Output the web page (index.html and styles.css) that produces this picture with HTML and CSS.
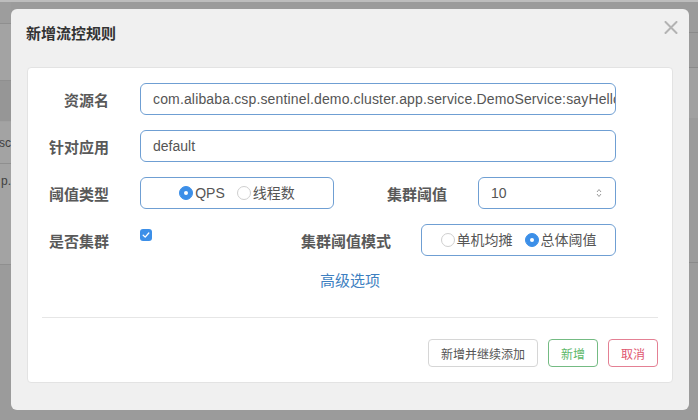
FILE: index.html
```html
<!DOCTYPE html>
<html lang="zh">
<head>
<meta charset="utf-8">
<title>新增流控规则</title>
<link rel="stylesheet" href="styles.css">
</head>
<body>
<div class="page">
  <div class="bg-left">
    <div class="bl bl-a"></div>
    <div class="bl bl-b"></div>
    <div class="bl bl-c"></div>
    <div class="bl bl-d"><span>sc</span></div>
    <div class="bl bl-e"><span>p.</span></div>
    <div class="bl bl-f"></div>
  </div>
  <div class="bg-mid"></div>
  <div class="bg-right">
    <div class="br br-a"></div>
    <div class="br br-b"></div>
    <div class="br br-c"></div>
    <div class="br br-d"></div>
    <div class="br br-e"></div>
  </div>
</div>

<div class="modal">
  <div class="modal-header">
    <h4 class="modal-title">新增流控规则</h4>
    <span class="close" aria-label="关闭">
      <svg width="14" height="13" viewBox="0 0 14 13"><path d="M1.5 1 L12.5 12 M12.5 1 L1.5 12" stroke="#b3b3b3" stroke-width="2" stroke-linecap="round" fill="none"/></svg>
    </span>
  </div>
  <div class="card">
    <div class="form">
      <div class="row">
        <label class="lbl">资源名</label>
        <div class="field grow long">com.alibaba.csp.sentinel.demo.cluster.app.service.DemoService:sayHello</div>
      </div>
      <div class="row">
        <label class="lbl">针对应用</label>
        <div class="field grow">default</div>
      </div>
      <div class="row">
        <label class="lbl">阈值类型</label>
        <div class="field radios r1">
          <span class="radio on"></span><span class="rtext">QPS</span>
          <span class="radio"></span><span class="rtext">线程数</span>
        </div>
        <label class="lbl2 w113">集群阈值</label>
        <div class="field num">
          <span class="numval">10</span>
          <svg class="spin" width="6" height="10" viewBox="0 0 6 10"><path d="M1 4 L3 1.5 L5 4 M1 6 L3 8.5 L5 6" stroke="#9a9a9a" stroke-width="1" fill="none"/></svg>
        </div>
      </div>
      <div class="row">
        <label class="lbl">是否集群</label>
        <div class="checkcell">
          <span class="check">
            <svg width="12" height="12" viewBox="0 0 12 12"><path d="M3.2 6.2 L5.2 8.1 L8.8 4" stroke="#fff" stroke-width="1.3" fill="none" stroke-linecap="round" stroke-linejoin="round"/></svg>
          </span>
        </div>
        <label class="lbl2">集群阈值模式</label>
        <div class="field radios r2">
          <span class="radio"></span><span class="rtext">单机均摊</span>
          <span class="radio on"></span><span class="rtext">总体阈值</span>
        </div>
      </div>
    </div>
    <div class="adv"><a class="adv-link">高级选项</a></div>
    <div class="divider"></div>
    <div class="footer">
      <button class="btn">新增并继续添加</button>
      <button class="btn btn-green">新增</button>
      <button class="btn btn-red">取消</button>
    </div>
  </div>
</div>
</body>
</html>
```

FILE: styles.css
```css
html, body {
  margin: 0;
  padding: 0;
}
body {
  width: 698px;
  height: 420px;
  overflow: hidden;
  position: relative;
  background: #9b9b9b;
  font-family: "Liberation Sans", "Noto Sans CJK SC", sans-serif;
}

/* background page (behind the overlay) */
.page {
  display: flex;
  height: 420px;
  border-top: 2px solid #bdbdbd;
  box-sizing: border-box;
}
.bg-left {
  width: 11px;
  display: flex;
  flex-direction: column;
}
.bl {
  border-bottom: 1px solid #8f8f8f;
  display: flex;
  justify-content: flex-end;
  overflow: hidden;
  font-size: 12px;
  color: #3f3f3f;
  background: #a3a3a3;
}
.bl span { white-space: nowrap; }
.bl-a { height: 21px; background: #9d9d9d; }
.bl-b { height: 56px; }
.bl-c { height: 40px; background: #969696; border-bottom-color: #a0a0a0; }
.bl-d { height: 41px; align-items: center; }
.bl-e { height: 101px; align-items: flex-start; padding-top: 10px; box-sizing: border-box; }
.bl-f { flex: 1; border-bottom: none; background: #9b9b9b; }
.bg-mid { flex: 1; }
.bg-right {
  width: 9px;
  display: flex;
  flex-direction: column;
}
.br { border-bottom: 1px solid #8a8a8a; }
.br-a { height: 30px; }
.br-b { height: 34px; }
.br-c { height: 50px; background: #a1a1a1; border-bottom: none; }
.br-d { height: 144px; }
.br-e { flex: 1; border-bottom: none; }

/* modal */
.modal {
  position: absolute;
  left: 11px;
  top: 9px;
  width: 678px;
  background: #f0f0f0;
  border-radius: 6px;
  padding-bottom: 27px;
}
.modal-header {
  height: 58px;
  padding: 0 11px 0 15px;
  display: flex;
  justify-content: space-between;
  align-items: flex-start;
}
.modal-title {
  margin: 16px 0 0;
  font-size: 15px;
  line-height: 18px;
  font-weight: bold;
  color: #333;
}
.close {
  margin-top: 12px;
  display: block;
  width: 14px;
  height: 13px;
}
.close svg { display: block; }

.card {
  margin: 0 16px;
  background: #fff;
  border: 1px solid #e3e3e3;
  border-radius: 4px;
  padding: 15px 0 15px;
}
.form {
  display: flex;
  flex-direction: column;
  gap: 15px;
  padding-right: 56px;
}
.row {
  display: flex;
  align-items: center;
  height: 32px;
}
.lbl {
  flex: none;
  width: 81px;
  margin-right: 31px;
  text-align: right;
  font-size: 15px;
  font-weight: bold;
  color: #595959;
  white-space: nowrap;
}
.lbl2 {
  flex: none;
  margin-right: 30px;
  text-align: right;
  font-size: 15px;
  font-weight: bold;
  color: #595959;
  white-space: nowrap;
}
.w113 { width: 113px; margin-right: 31px; }
.field {
  height: 32px;
  box-sizing: border-box;
  border: 1px solid #6f9fd3;
  border-radius: 6px;
  padding: 0 12px;
  font-size: 14px;
  line-height: 30px;
  color: #555;
  white-space: nowrap;
  overflow: hidden;
  background: #fff;
}
.long { letter-spacing: 0.15px; padding-right: 3px; }
.grow { flex: 1; min-width: 0; }
.radios {
  flex: none;
  display: flex;
  align-items: center;
  justify-content: center;
  padding: 0;
}
.r1 { width: 194px; }
.r2 { width: 195px; }
.radio {
  flex: none;
  width: 14px;
  height: 14px;
  box-sizing: border-box;
  border-radius: 50%;
  border: 1px solid #cfcfcf;
  background: #fff;
  margin-right: 2px;
  position: relative;
}
.rtext + .radio { margin-left: 12px; }
.radio.on {
  background: #3c8fe8;
  border-color: #3c8fe8;
}
.radio.on::after {
  content: "";
  position: absolute;
  left: 4px;
  top: 4px;
  width: 4px;
  height: 4px;
  border-radius: 50%;
  background: #fff;
}
.rtext { font-size: 14px; color: #555; }
.num {
  flex: none;
  width: 138px;
  display: flex;
  align-items: center;
  justify-content: space-between;
  padding: 0 13px 0 12px;
}
.spin { display: block; }
.checkcell {
  flex: 1;
  align-self: flex-start;
  padding-top: 5px;
}
.check {
  display: block;
  width: 12px;
  height: 12px;
  border-radius: 3px;
  background: #3c8fe8;
}
.check svg { display: block; }

.adv {
  margin-top: 16px;
  text-align: center;
  line-height: 18px;
}
.adv-link {
  font-size: 15px;
  color: #3d7fc1;
}
.divider {
  margin: 27px 14px 0;
  height: 1px;
  background: #e6e6e6;
}
.footer {
  margin-top: 21px;
  padding-right: 14px;
  display: flex;
  justify-content: flex-end;
  gap: 10px;
}
.btn {
  height: 28px;
  padding: 0 12px;
  font-family: inherit;
  font-size: 12px;
  color: #555;
  background: #fff;
  border: 1px solid #d6d6d6;
  border-radius: 4px;
}
.btn-green {
  color: #5cb86a;
  border-color: #74bb83;
}
.btn-red {
  color: #e0566f;
  border-color: #e48094;
}
```
